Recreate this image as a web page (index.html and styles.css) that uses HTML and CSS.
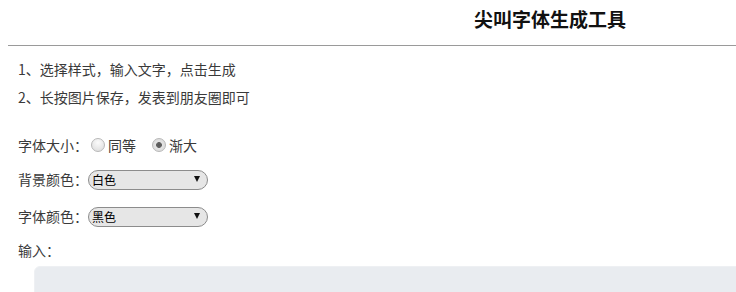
FILE: index.html
```html
<!DOCTYPE html>
<html lang="zh-CN">
<head>
<meta charset="utf-8">
<title>尖叫字体生成工具</title>
<link rel="stylesheet" href="styles.css">
</head>
<body>
<div class="page">
  <header class="header">
    <h1 class="title">尖叫字体生成工具</h1>
  </header>
  <hr class="rule">
  <div class="tips">
    <p class="tip">1、选择样式，输入文字，点击生成</p>
    <p class="tip">2、长按图片保存，发表到朋友圈即可</p>
  </div>
  <form class="form">
    <div class="row row-size">
      <span class="label">字体大小：</span>
      <label class="radio"><input type="radio" name="size" class="radio-input"><span>同等</span></label>
      <label class="radio"><input type="radio" name="size" class="radio-input" checked><span>渐大</span></label>
    </div>
    <div class="row row-bg">
      <span class="label">背景颜色：</span>
      <span class="select-wrap">
        <select class="select"><option>白色</option><option>黑色</option></select>
      </span>
    </div>
    <div class="row row-fg">
      <span class="label">字体颜色：</span>
      <span class="select-wrap">
        <select class="select"><option>黑色</option><option>白色</option></select>
      </span>
    </div>
    <div class="row row-input">
      <span class="label">输入：</span>
    </div>
    <textarea class="input-box"></textarea>
  </form>
</div>
</body>
</html>
```
FILE: styles.css
```css
html, body {
  margin: 0;
  padding: 0;
  background: #ffffff;
}
body {
  font-family: "Noto Sans CJK SC", "Noto Sans", sans-serif;
  color: #3a3a3a;
  font-size: 14px;
  overflow: hidden;
}
.page {
  width: 1084px;
  padding: 0 8px;
}
.header {
  padding-top: 7px;
}
.title {
  margin: 0;
  font-size: 19px;
  line-height: 24px;
  font-weight: bold;
  color: #111;
  text-align: center;
}
.rule {
  margin: 14px 0 0 0;
  border: 0;
  height: 1px;
  background: #9a9a9a;
}
.tips {
  padding: 9px 0 0 10px;
}
.tip {
  margin: 0;
  line-height: 28px;
  font-size: 14px;
}
.form {
  display: flex;
  flex-direction: column;
  padding-top: 20px;
}
.row {
  display: flex;
  align-items: center;
  height: 28px;
  padding-left: 10px;
}
.row-bg { margin-top: 6px; }
.row-fg { margin-top: 9px; }
.row-input { margin-top: 6px; }
.label {
  font-size: 14px;
  line-height: 28px;
}
.radio {
  display: flex;
  align-items: center;
  margin-left: 3px;
  margin-right: 13px;
}
.radio-input {
  appearance: none;
  -webkit-appearance: none;
  width: 14px;
  height: 14px;
  margin: 0 3px 0 0;
  border-radius: 50%;
  border: 1px solid #b8b8b8;
  background: radial-gradient(circle at 50% 30%, #fbfbfb 0%, #dadada 100%);
  box-sizing: border-box;
}
.radio-input:checked {
  background: radial-gradient(circle, #555 0, #666 2.6px, #e4e4e4 3.2px, #d6d6d6 100%);
}
.select-wrap {
  position: relative;
  display: inline-block;
}
.select-wrap::after {
  content: "";
  position: absolute;
  right: 8px;
  top: 7px;
  width: 0;
  height: 0;
  border-left: 3px solid transparent;
  border-right: 3px solid transparent;
  border-top: 6px solid #111;
  pointer-events: none;
}
.select {
  appearance: none;
  -webkit-appearance: none;
  width: 120px;
  height: 20px;
  box-sizing: border-box;
  border: 1px solid #8c8c8c;
  border-radius: 10px;
  background: #e6e6e6;
  font-family: "Noto Sans CJK SC", sans-serif;
  font-size: 12px;
  color: #000;
  padding: 0 0 0 3px;
  line-height: 18px;
  margin: 0;
  outline: none;
}
.input-box {
  display: block;
  margin: 2px 0 0 26px;
  width: 1058px;
  height: 120px;
  box-sizing: border-box;
  border: 1px solid #eef0f3;
  border-radius: 6px;
  background: #e9ecf0;
  resize: none;
  outline: none;
}
```
